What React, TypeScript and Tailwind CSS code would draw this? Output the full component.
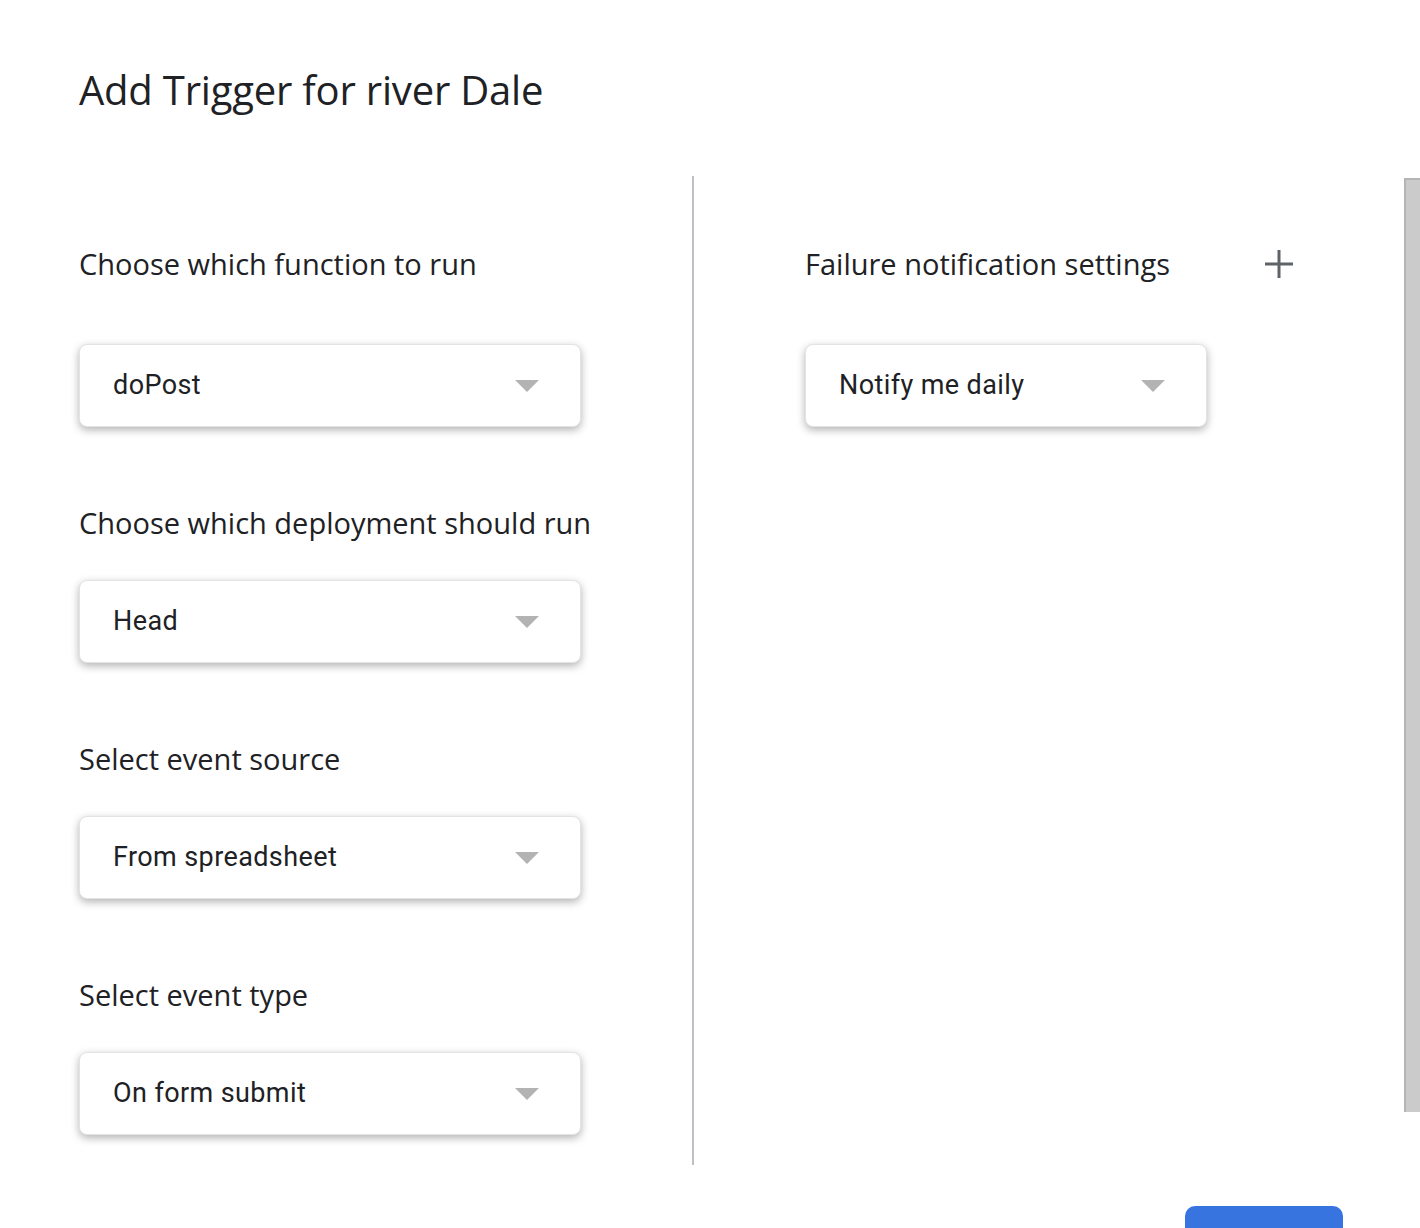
import React from 'react'

const font = { fontFamily: 'Roboto, "Liberation Sans", sans-serif' }
const labelFont = { fontFamily: '"Open Sans", Roboto, sans-serif' }

function Caret() {
  return (
    <svg width="24" height="12" viewBox="0 0 24 12" className="shrink-0">
      <path d="M0 0 L24 0 L12 12 Z" fill="#b3b3b3" />
    </svg>
  )
}

function Dropdown({ value, width }: { value: string; width: string }) {
  return (
    <div
      className={`${width} h-[83px] flex items-center justify-between pl-[33px] pr-[41px] bg-white rounded-[8px] border border-[#e3e3e3] shadow-[0_3px_8px_rgba(0,0,0,0.3)]`}
    >
      <span className="text-[27px] text-[#202124] tracking-[0.4px]">{value}</span>
      <Caret />
    </div>
  )
}

function Label({ children }: { children: React.ReactNode }) {
  return (
    <div className="text-[29px] leading-[36px] text-[#202124] tracking-[0px]" style={labelFont}>
      {children}
    </div>
  )
}

function Field({ label, value }: { label: string; value: string }) {
  return (
    <div className="flex flex-col gap-[39px]">
      <Label>{label}</Label>
      <Dropdown value={value} width="w-[502px]" />
    </div>
  )
}

export default function App() {
  return (
    <div className="relative w-[1420px] h-[1228px] bg-white overflow-hidden" style={font}>
      <div className="pl-[79px] pt-[66px]">
        <h1 className="text-[40px] leading-[48px] text-[#202124] font-normal tracking-[-0.2px]" style={labelFont}>
          Add Trigger for river Dale
        </h1>
      </div>

      <div className="flex mt-[62px]">
        <div className="w-[692px] shrink-0 pl-[79px] h-[989px] flex flex-col">
          <div className="mt-[70px] flex flex-col gap-[62px]">
            <Label>Choose which function to run</Label>
            <Dropdown value="doPost" width="w-[502px]" />
          </div>
          <div className="mt-[78px]">
            <Field label="Choose which deployment should run" value="Head" />
          </div>
          <div className="mt-[78px]">
            <Field label="Select event source" value="From spreadsheet" />
          </div>
          <div className="mt-[78px]">
            <Field label="Select event type" value="On form submit" />
          </div>
        </div>

        <div className="w-[2px] shrink-0 h-[989px] bg-[#bdc1c6]" />

        <div className="flex-1 pl-[111px] flex flex-col">
          <div className="mt-[70px] flex items-center w-[489px] justify-between">
            <Label>Failure notification settings</Label>
            <svg width="30" height="30" viewBox="0 0 30 30">
              <path d="M15 1 V29 M1 15 H29" stroke="#5f6368" strokeWidth="3" />
            </svg>
          </div>
          <div className="mt-[62px]">
            <Dropdown value="Notify me daily" width="w-[402px]" />
          </div>
        </div>

        <div className="w-[16px] shrink-0 h-[934px] mt-[2px] bg-[#cbcbcb] border-l-2 border-t-2 border-[#b5b5b5]" />
      </div>

      <div className="absolute left-[1185px] top-[1206px] w-[158px] h-[40px] rounded-t-[10px] bg-[#3874e0]" />
    </div>
  )
}
